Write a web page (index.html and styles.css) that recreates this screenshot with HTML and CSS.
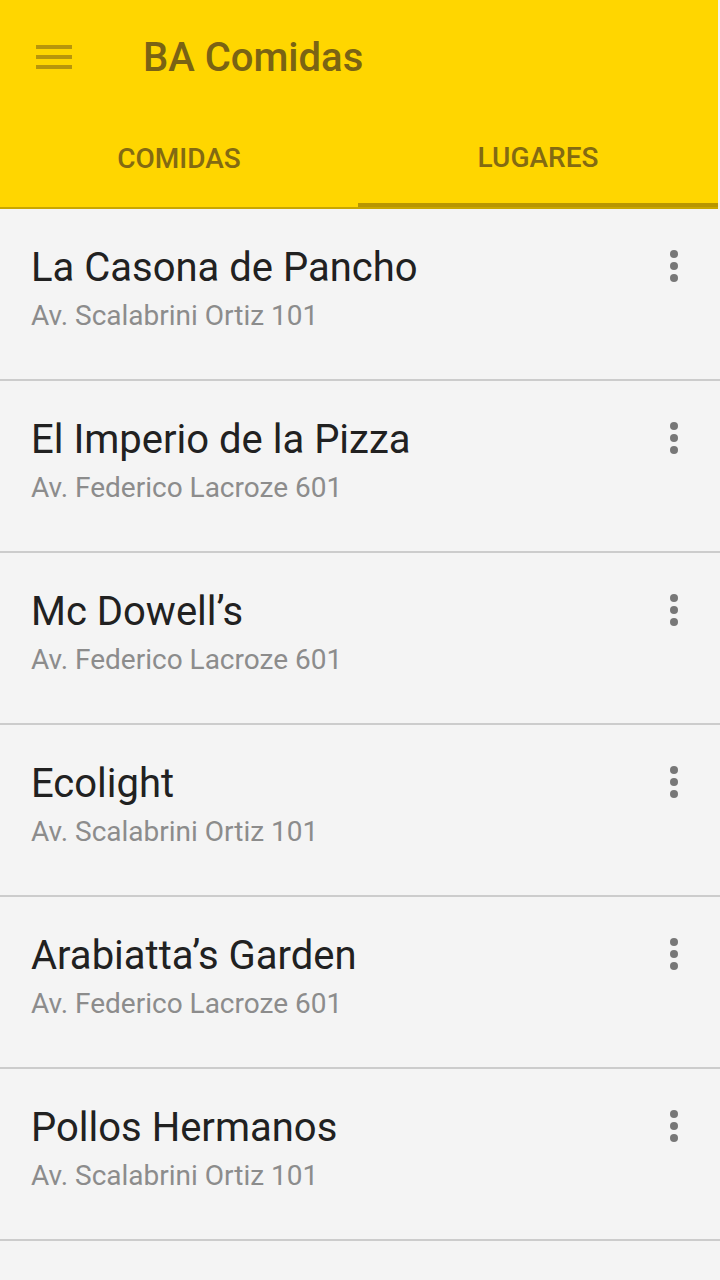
FILE: index.html
```html
<!DOCTYPE html>
<html lang="es">
<head>
<meta charset="utf-8">
<title>BA Comidas</title>
<link rel="stylesheet" href="styles.css">
</head>
<body>
<div class="app">
  <header class="appbar">
    <div class="toolbar">
      <div class="menu" aria-label="menu">
        <span></span><span></span><span></span>
      </div>
      <h1 class="title">BA Comidas</h1>
    </div>
    <nav class="tabs">
      <div class="tab">COMIDAS</div>
      <div class="tab active">LUGARES</div>
    </nav>
  </header>
  <ul class="list">
    <li class="item">
      <div class="text"><div class="name">La Casona de Pancho</div><div class="addr">Av. Scalabrini Ortiz 101</div></div>
      <div class="more"><i></i><i></i><i></i></div>
    </li>
    <li class="item">
      <div class="text"><div class="name">El Imperio de la Pizza</div><div class="addr">Av. Federico Lacroze 601</div></div>
      <div class="more"><i></i><i></i><i></i></div>
    </li>
    <li class="item">
      <div class="text"><div class="name">Mc Dowell’s</div><div class="addr">Av. Federico Lacroze 601</div></div>
      <div class="more"><i></i><i></i><i></i></div>
    </li>
    <li class="item">
      <div class="text"><div class="name">Ecolight</div><div class="addr">Av. Scalabrini Ortiz 101</div></div>
      <div class="more"><i></i><i></i><i></i></div>
    </li>
    <li class="item">
      <div class="text"><div class="name">Arabiatta’s Garden</div><div class="addr">Av. Federico Lacroze 601</div></div>
      <div class="more"><i></i><i></i><i></i></div>
    </li>
    <li class="item">
      <div class="text"><div class="name">Pollos Hermanos</div><div class="addr">Av. Scalabrini Ortiz 101</div></div>
      <div class="more"><i></i><i></i><i></i></div>
    </li>
  </ul>
</div>
</body>
</html>
```
FILE: styles.css
```css
html, body {
  margin: 0;
  padding: 0;
}
body {
  background: #f4f4f4;
  font-family: Roboto, "Noto Sans", sans-serif;
  width: 720px;
  height: 1280px;
  overflow: hidden;
}
.app {
  width: 718px;
  min-height: 1280px;
  background: #f4f4f4;
}
.appbar {
  background: #ffd600;
  border-bottom: 2px solid #c9a700;
}
.toolbar {
  height: 112px;
  display: flex;
  align-items: center;
}
.menu {
  width: 36px;
  margin-left: 36px;
  display: flex;
  flex-direction: column;
  gap: 6px;
  margin-top: 2px;
}
.menu span {
  display: block;
  height: 4px;
  background: #b8960b;
}
.title {
  margin: 0 0 0 71px;
  font-size: 40px;
  font-weight: 500;
  color: #7a6314;
  letter-spacing: 0;
  padding-top: 3px;
}
.tabs {
  display: flex;
  height: 95px;
}
.tab {
  flex: 0 0 358px;
  display: flex;
  align-items: center;
  justify-content: center;
  font-size: 28px;
  font-weight: 500;
  color: #836a12;
  box-sizing: border-box;
  padding-bottom: 2px;
}
.tab.active {
  flex: 0 0 360px;
  border-bottom: 4px solid #b89600;
  padding-bottom: 0;
}
.list {
  list-style: none;
  margin: 0;
  padding: 0;
}
.item {
  height: 170px;
  border-bottom: 2px solid #cccccc;
  display: flex;
  align-items: flex-start;
  width: 720px;
}
.text {
  flex: 1;
  padding: 32px 0 0 31px;
}
.name {
  font-size: 40px;
  color: #212121;
  line-height: 54px;
}
.addr {
  font-size: 28px;
  color: #8c8c8c;
  line-height: 40px;
  margin-top: 1px;
}
.more {
  width: 8px;
  margin: 41px 42px 0 0;
  display: flex;
  flex-direction: column;
  gap: 4px;
}
.more i {
  display: block;
  width: 8px;
  height: 8px;
  border-radius: 50%;
  background: #777777;
}
```
